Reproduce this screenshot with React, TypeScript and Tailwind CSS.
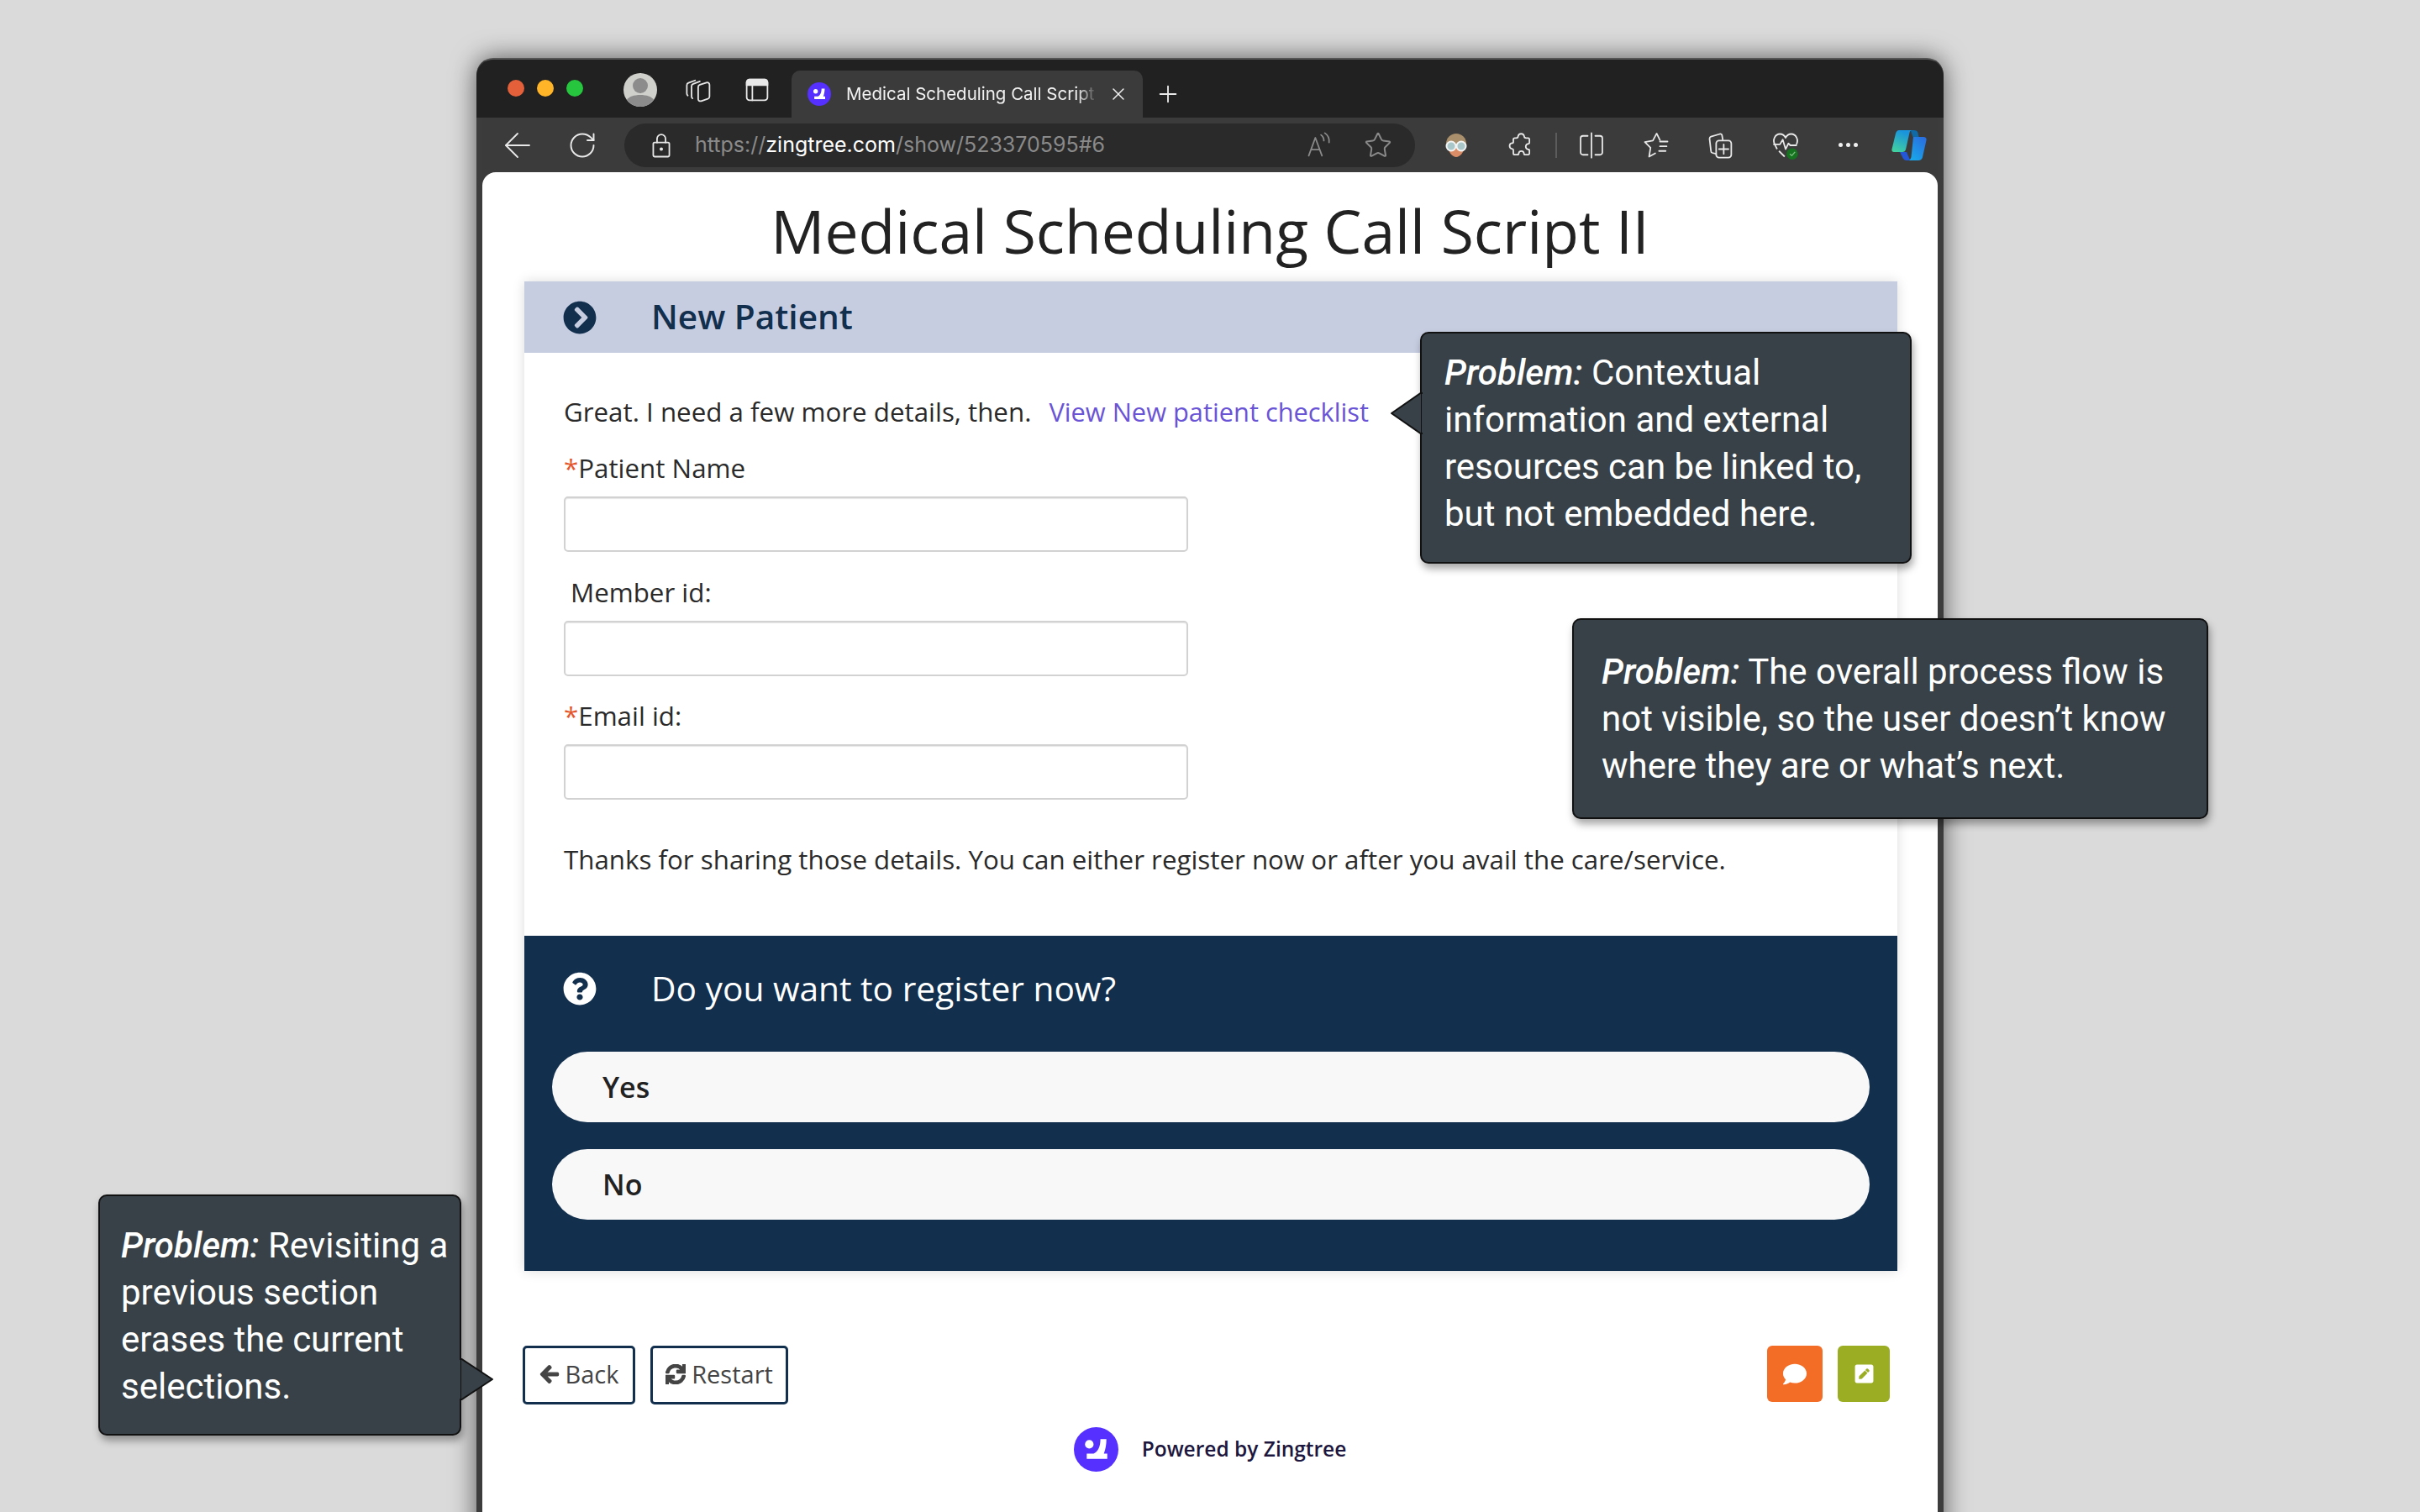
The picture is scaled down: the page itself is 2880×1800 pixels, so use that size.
import { ReactNode } from 'react';
import { FaArrowLeft, FaChevronCircleRight, FaComment, FaPenSquare, FaQuestionCircle, FaSync } from 'react-icons/fa';
import { ArrowLeft, RotateCw, Star, Plus, X } from 'lucide-react';

const openSans = 'font-["Open_Sans",sans-serif]';

function ZingtreeLogo({ className }: { className: string }) {
  return (
    <svg viewBox="0 0 52 52" className={className}>
      <circle cx="26" cy="26" r="26" fill="#5530ff" />
      <circle cx="18" cy="20" r="5" fill="#fff" />
      <path d="M31 14h7c0 6-1 12-3 17h4v6H15v-6h8c5-2 8-8 8-17z" fill="#fff" />
    </svg>
  );
}

function ToolbarIcon({ children, className = 'text-[#e8e8e8]' }: { children: ReactNode; className?: string }) {
  return (
    <svg viewBox="0 0 32 32" fill="none" stroke="currentColor" strokeWidth="1.6" strokeLinejoin="round" strokeLinecap="round" className={`w-9 h-9 shrink-0 ${className}`}>
      {children}
    </svg>
  );
}

function Field({ label, required, indent }: { label: string; required?: boolean; indent?: boolean }) {
  return (
    <div className="flex flex-col">
      <label className={`text-[31.3px] leading-[44px] text-[#2a2a2a] pb-[2px] -mt-[2px] ${indent ? 'pl-2' : ''}`}>
        {required && <span className="text-[#e4572e]">*</span>}
        {label}
      </label>
      <div className="mt-[10px] w-[743px] h-[66px] rounded-[5px] bg-white border-2 border-[#d2d2d2] shadow-[inset_0_1px_1px_rgba(0,0,0,0.1)]" />
    </div>
  );
}

function Callout({ className, children }: { className: string; children: ReactNode }) {
  return (
    <div className={`absolute rounded-[10px] border-2 border-[#111] bg-[#384148] text-white font-["Roboto",sans-serif] text-[42px] leading-[56px] shadow-[2px_6px_10px_rgba(0,0,0,0.35)] ${className}`}>
      {children}
    </div>
  );
}

function Answer({ label }: { label: string }) {
  return (
    <div className="h-[84px] rounded-full bg-[#f8f8f8] flex items-center pl-[60px] text-[34px] font-semibold text-[#222]">
      {label}
    </div>
  );
}

function App() {
  return (
    <div className={`relative w-[2880px] h-[1800px] overflow-hidden bg-[#dadada] pt-[69px] pl-[567px] ${openSans}`}>
      {/* Browser window */}
      <div className="w-[1746px] h-[1800px] rounded-t-[20px] bg-[#3b3b3b] border-x-[7px] border-t-2 border-[#3c3c3c] border-t-[#555] shadow-[0_0_30px_rgba(0,0,0,0.6)] flex flex-col">
        {/* Tab strip */}
        <div className="h-[69px] shrink-0 -mx-[7px] rounded-t-[20px] bg-[#212121] flex items-end pl-[37px] font-['Inter',sans-serif]">
          <div className="flex items-center gap-[15px] h-[69px] pb-[1px]">
            <span className="w-5 h-5 rounded-full bg-[#e4603a]" />
            <span className="w-5 h-5 rounded-full bg-[#ffb527]" />
            <span className="w-5 h-5 rounded-full bg-[#27c63f]" />
          </div>
          <div className="flex items-center h-[69px] pt-[2px] ml-[48px] gap-[32px]">
            <svg viewBox="0 0 40 40" className="w-10 h-10">
              <circle cx="20" cy="20" r="20" fill="#cfcfcb" />
              <circle cx="20" cy="15" r="9" fill="#8c8c8c" />
              <path d="M4 32c4-8 28-8 32 0a20 20 0 0 1-32 0z" fill="#8c8c8c" />
            </svg>
            <ToolbarIcon>
              <path d="M4 22c-.6-.5-1-1.200-1-2.200V11c0-1.200.7-2 1.800-2.400l7-2.600" />
              <path d="M9 25c-.6-.5-1-1.200-1-2.200V12c0-1.200.7-2 1.800-2.400l7-2.600" />
              <path d="M15 13c0-1.200.7-2 1.800-2.400l7-2.300c1.800-.6 3.200.6 3.200 2.300v12.500c0 1.200-.7 2-1.800 2.400l-7 2.300c-1.800.6-3.200-.6-3.200-2.300z" />
            </ToolbarIcon>
            <ToolbarIcon className="ml-[1px] text-[#e8e8e8]">
              <rect x="5" y="5" width="22" height="22" rx="3" />
              <path d="M5 8a3 3 0 0 1 3-3h16a3 3 0 0 1 3 3v3H5z" fill="currentColor" />
              <path d="M11 11v16" />
            </ToolbarIcon>
          </div>
          <div className="ml-[23px] w-[418px] h-[56px] rounded-t-[10px] bg-[#3b3b3b] flex items-center pl-[19px] pr-[17px] text-[#f2f2f2]">
            <ZingtreeLogo className="w-7 h-7 shrink-0" />
            <span className="ml-[18px] w-[300px] whitespace-nowrap text-[20.5px] [mask-image:linear-gradient(to_right,black_92%,transparent)]">Medical Scheduling Call Script</span>
            <X className="ml-[13px] w-6 h-6" strokeWidth={1.5} />
          </div>
          <Plus className="ml-[14px] mb-[12px] w-8 h-8 text-[#e8e8e8]" strokeWidth={1.4} />
        </div>

        {/* Address bar */}
        <div className="h-[65px] shrink-0 flex items-center font-['Inter',sans-serif]">
          <ArrowLeft className="ml-[18px] w-12 h-12 text-[#e8e8e8]" strokeWidth={0.9} />
          <RotateCw className="ml-[35px] w-9 h-9 text-[#e8e8e8]" strokeWidth={1.3} />
          <div className="ml-[32px] w-[941px] h-[52px] rounded-full bg-[#2a2a2a] flex items-center pl-[26px] pr-[27px]">
            <ToolbarIcon>
              <path d="M9 13h14a1.500 1.500 0 0 1 1.500 1.500v12a1.500 1.500 0 0 1-1.500 1.500H9a1.500 1.500 0 0 1-1.500-1.500v-12A1.500 1.500 0 0 1 9 13z" />
              <path d="M11.500 13V9a4.500 4.500 0 0 1 9 0v4" />
              <circle cx="16" cy="20" r="1" fill="currentColor" />
            </ToolbarIcon>
            <div className="ml-[22px] text-[25px] text-[#8a8a8a] whitespace-nowrap">
              https://<span className="text-white">zingtree.com</span>/show/523370595#6
            </div>
            <div className="ml-auto flex items-center gap-[34px] text-[#8a8a8a]">
              <ToolbarIcon className="text-[#8a8a8a]">
                <path d="M4 27 11 8l7 19M6.500 20.500h9" />
                <path d="M17 5c2 1.500 3 4 3 6M21 3c3 2 5 6 4.500 10" />
              </ToolbarIcon>
              <Star className="w-[34px] h-[34px]" strokeWidth={1.4} />
            </div>
          </div>
          <div className="ml-[33px] flex items-center text-[#e8e8e8]">
            <svg viewBox="0 0 32 32" className="w-8 h-8">
              <circle cx="16" cy="14" r="12" fill="#a98f6b" />
              <path d="M6 18c1 7 6 12 10 12s9-5 10-12z" fill="#d98c66" />
              <circle cx="10" cy="17" r="5.500" fill="#a9c6c8" stroke="#f4f4f4" strokeWidth="2" />
              <circle cx="22" cy="17" r="5.500" fill="#a9c6c8" stroke="#f4f4f4" strokeWidth="2" />
            </svg>
            <ToolbarIcon className="ml-[43px] text-[#e8e8e8]">
              <path d="M13 6.500a3.300 3.300 0 0 1 6.500 0c0 1.200 1 1.800 2 1.800h2.200c.9 0 1.300.6 1.300 1.500v3.400c0 1-1 1.300-1.800 1.300a3 3 0 0 0 0 5.700c.8 0 1.800.4 1.800 1.300v2.800c0 1-.5 1.600-1.400 1.600h-3c-.9 0-1.400-.8-1.400-1.500a2.800 2.800 0 0 0-5.500 0c0 .7-.5 1.500-1.400 1.500H9.500c-.9 0-1.500-.6-1.500-1.500v-3.500c0-.8-.7-1.200-1.500-1.300a3 3 0 0 1 0-5.900c.8 0 1.500-.5 1.500-1.300V9.800c0-.9.600-1.500 1.500-1.500H11c1 0 2-.6 2-1.800z" />
            </ToolbarIcon>
            <span className="ml-[23px] w-[2px] h-[30px] bg-[#5c5c5c]" />
            <ToolbarIcon className="ml-[23px] text-[#e8e8e8]">
              <path d="M12 6H7a2.500 2.500 0 0 0-2.500 2.500v15A2.500 2.500 0 0 0 7 26h5M20 6h5a2.500 2.500 0 0 1 2.500 2.500v15A2.500 2.500 0 0 1 25 26h-5M16 3v26" />
            </ToolbarIcon>
            <ToolbarIcon className="ml-[41px] text-[#e8e8e8]">
              <path d="M20 10.500 16.500 3.500 12.500 11 4 12.500 10 18.500 8.500 28 15 24.500" />
              <path d="M20 12h8M20 17h7M19 22h7" />
            </ToolbarIcon>
            <ToolbarIcon className="ml-[41px] text-[#e8e8e8]">
              <path d="M11 25 7 24c-1-.3-1.500-1-1.500-2L4 9c0-1 .5-2 1.500-2.300L15 4c1-.2 2 .3 2.200 1.500L18 10" />
              <rect x="11" y="11" width="16" height="18" rx="3" />
              <path d="M19 15v10M14 20h10" />
            </ToolbarIcon>
            <svg viewBox="0 0 32 32" className="ml-[41px] w-9 h-9" fill="none" stroke="#e8e8e8" strokeWidth="1.6" strokeLinejoin="round">
              <path d="M7 20 4.500 15c-2.500-5 .5-11 5.500-11 3 0 5 2 6 4 1-2 3-4 6-4 5 0 8 6 5.500 11" />
              <path d="M3 15h7l3-5 3 10 3-6 2 2h7" />
              <path d="M9 22l6 6" />
              <circle cx="23" cy="25" r="6" fill="#16731f" stroke="none" />
              <path d="M20.500 25l2 2 3.500-4" stroke="#7fbf85" strokeWidth="1.200" />
            </svg>
            <div className="ml-[45px] flex gap-[4px]">
              <span className="w-[5px] h-[5px] rounded-full bg-[#f0f0f0]" />
              <span className="w-[5px] h-[5px] rounded-full bg-[#f0f0f0]" />
              <span className="w-[5px] h-[5px] rounded-full bg-[#f0f0f0]" />
            </div>
            <svg viewBox="0 0 42 38" className="ml-[40px] w-[42px] h-[38px]">
              <defs>
                <linearGradient id="cpA" x1="0" y1="1" x2="0.4" y2="0">
                  <stop offset="0" stopColor="#45d69a" />
                  <stop offset="1" stopColor="#1a94dc" />
                </linearGradient>
                <linearGradient id="cpB" x1="0.2" y1="1" x2="0.8" y2="0">
                  <stop offset="0" stopColor="#18a8e8" />
                  <stop offset="1" stopColor="#2a6ee0" />
                </linearGradient>
              </defs>
              <path d="M22 1h5c2 0 4 1 4.500 3l1 5h-7L24 5c-.5-2-1-4-2-4z" fill="#0f6aa5" />
              <path d="M10 27h8l3 7c.5 1.500 1.500 3 3 3h-6c-2 0-3.500-1-4.500-3z" fill="#2456d8" />
              <path d="M9 1h15c-1 0-2 1-2.500 3L17 24c-.5 2-2 3-4 3H3c-2 0-3-1.500-2.500-3.500L5 5c.5-2 2-4 4-4z" fill="url(#cpA)" />
              <path d="M26 9h12c3 0 4 2 3.500 4L37 33c-.5 2.500-2.500 4-5 4H21c1-1 2-2 2.500-4z" fill="url(#cpB)" />
            </svg>
          </div>
        </div>

        {/* Page */}
        <div className="flex-1 rounded-t-[16px] bg-white flex flex-col items-center">
          <h1 className="mt-[25px] text-[71.4px] leading-[90px] text-[#222] whitespace-nowrap">Medical Scheduling Call Script II</h1>

          <div className="mt-[15px] w-[1634px] self-start ml-[50px] shadow-[0_0_14px_rgba(0,0,0,0.14)]">
            <div className="h-[85px] bg-[#c6cde0] flex items-center pl-[46px] text-[#122f4e]">
              <FaChevronCircleRight className="w-[40px] h-[40px]" />
              <span className="ml-[65px] text-[40.6px] font-semibold">New Patient</span>
            </div>

            <div className="h-[694px] bg-white pl-[47px] pt-[48px] text-[#2a2a2a]">
              <div className="text-[31.3px] leading-[44px]">
                Great. I need a few more details, then.
                <span className="ml-[21px] text-[30.8px] text-[#6a54d6] font-medium">View New patient checklist</span>
              </div>
              <div className="mt-[25px] flex flex-col gap-[27.5px]">
                <Field label="Patient Name" required />
                <Field label="Member id:" indent />
                <Field label="Email id:" required />
              </div>
              <div className="mt-[49px] text-[31.3px] leading-[44px]">
                Thanks for sharing those details. You can either register now or after you avail the care/service.
              </div>
            </div>

            <div className="h-[399px] bg-[#122f4e] px-[33px] pt-[38px]">
              <div className="h-[50px] flex items-center pl-[13px] text-white">
                <FaQuestionCircle className="w-[40px] h-[40px]" />
                <span className="ml-[65px] text-[40.7px]">Do you want to register now?</span>
              </div>
              <div className="mt-[50px] flex flex-col gap-[32px]">
                <Answer label="Yes" />
                <Answer label="No" />
              </div>
            </div>
          </div>

          <div className="mt-[89px] w-[1634px] self-start ml-[48px] flex items-start">
            <button className="h-[70px] w-[134px] rounded-[5px] border-[3px] border-[#122f4e] bg-white flex items-center justify-center gap-[7px] pb-[2px] text-[29px] text-[#444]">
              <FaArrowLeft className="w-[24px] h-[24px]" stroke="currentColor" strokeWidth={30} />Back
            </button>
            <button className="ml-[18px] h-[70px] w-[164px] rounded-[5px] border-[3px] border-[#122f4e] bg-white flex items-center justify-center gap-[7px] pb-[2px] text-[29px] text-[#444]">
              <FaSync className="w-[24px] h-[24px]" stroke="currentColor" strokeWidth={30} />Restart
            </button>
            <div className="ml-auto flex gap-[18px] pr-[7px]">
              <div className="w-[66px] h-[67px] rounded-[6px] bg-[#f46d27] flex items-center justify-center">
                <FaComment className="w-[28px] h-[28px] text-white" />
              </div>
              <div className="w-[62px] h-[67px] rounded-[6px] bg-[#9bad23] flex items-center justify-center">
                <FaPenSquare className="w-[25px] h-[25px] text-white" />
              </div>
            </div>
          </div>

          <div className="mt-[27px] flex items-center gap-[28px]">
            <ZingtreeLogo className="w-[53px] h-[53px]" />
            <span className="text-[24.5px] font-semibold text-[#1d1740]">Powered by Zingtree</span>
          </div>
        </div>
      </div>

      {/* Annotations */}
      <Callout className="left-[1690px] top-[395px] w-[585px] h-[276px] pl-[27px] pt-[19px]">
        <svg viewBox="0 0 38 50" className="absolute left-[-37px] top-[70px] w-[38px] h-[50px]">
          <path d="M37 0 1 25l36 25z" fill="#384148" stroke="#111" strokeWidth="2" strokeLinejoin="round" />
          <path d="M37 2v46h2V2z" fill="#384148" />
        </svg>
        <i className="font-medium">Problem:</i> Contextual<br />information and external<br />resources can be linked to,<br />but not embedded here.
      </Callout>
      <Callout className="left-[1871px] top-[736px] w-[757px] h-[239px] pl-[33px] pt-[34px]">
        <i className="font-medium">Problem:</i> The overall process flow is<br />not visible, so the user doesn’t know<br />where they are or what’s next.
      </Callout>
      <Callout className="left-[117px] top-[1422px] w-[432px] h-[287px] pl-[25px] pt-[31px]">
        <svg viewBox="0 0 40 50" className="absolute right-[-40px] top-[193px] w-[40px] h-[50px]">
          <path d="M1 0l38 25L1 50z" fill="#384148" stroke="#111" strokeWidth="2" strokeLinejoin="round" />
          <path d="M-1 2v46h2V2z" fill="#384148" />
        </svg>
        <i className="font-medium">Problem:</i> Revisiting a<br />previous section<br />erases the current<br />selections.
      </Callout>
    </div>
  );
}

export default App;
